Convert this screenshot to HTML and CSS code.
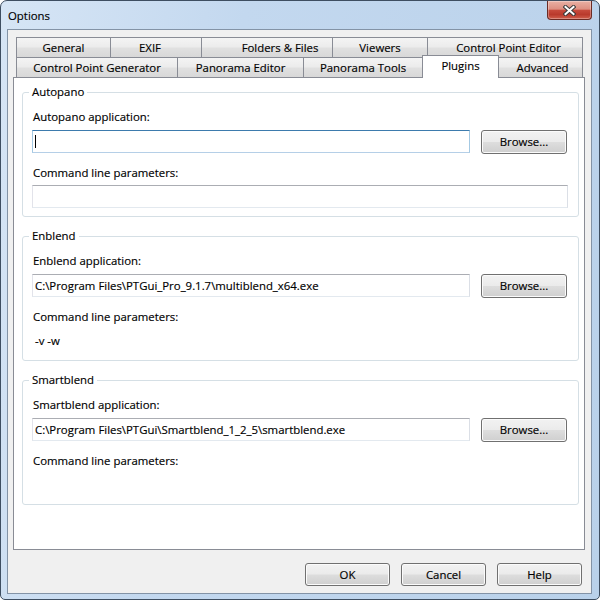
FILE: index.html
```html
<!DOCTYPE html>
<html>
<head>
<meta charset="utf-8">
<title>Options</title>
<link rel="stylesheet" href="styles.css">
</head>
<body>
<div class="window">
  <div class="titlebar">
    <span class="title">Options</span>
    <div class="close">
      <svg width="13" height="11" viewBox="0 0 13 11">
        <path d="M2.5 2 L10.5 9 M10.5 2 L2.5 9" stroke="#3a3a3a" stroke-width="4" stroke-linecap="square"/>
        <path d="M2.5 2 L10.5 9 M10.5 2 L2.5 9" stroke="#ffffff" stroke-width="2" stroke-linecap="square"/>
      </svg>
    </div>
  </div>
  <div class="client">
    <div class="tabs">
      <div class="tabrow">
        <div class="tab t-general">General</div>
        <div class="tab t-exif">EXIF</div>
        <div class="tab t-folders">Folders &amp; Files</div>
        <div class="tab t-viewers">Viewers</div>
        <div class="tab t-cpe last">Control Point Editor</div>
      </div>
      <div class="tabrow">
        <div class="tab t-cpg">Control Point Generator</div>
        <div class="tab t-pe">Panorama Editor</div>
        <div class="tab t-pt">Panorama Tools</div>
        <div class="tab t-plugins active">Plugins</div>
        <div class="tab t-advanced last">Advanced</div>
      </div>
      <div class="panel">
        <div class="group">
          <div class="legend">Autopano</div>
          <div class="label first">Autopano application:</div>
          <div class="row">
            <div class="field focused"><span class="caret"></span></div>
            <div class="btn browse">Browse...</div>
          </div>
          <div class="label second">Command line parameters:</div>
          <div class="field wide"></div>
        </div>
        <div class="group">
          <div class="legend">Enblend</div>
          <div class="label first">Enblend application:</div>
          <div class="row">
            <div class="field">C:\Program Files\PTGui_Pro_9.1.7\multiblend_x64.exe</div>
            <div class="btn browse">Browse...</div>
          </div>
          <div class="label second">Command line parameters:</div>
          <div class="field wide plain">-v -w</div>
        </div>
        <div class="group">
          <div class="legend">Smartblend</div>
          <div class="label first">Smartblend application:</div>
          <div class="row">
            <div class="field">C:\Program Files\PTGui\Smartblend_1_2_5\smartblend.exe</div>
            <div class="btn browse">Browse...</div>
          </div>
          <div class="label second">Command line parameters:</div>
          <div class="field wide plain"></div>
        </div>
      </div>
    </div>
    <div class="buttons">
      <div class="btn dlg">OK</div>
      <div class="btn dlg">Cancel</div>
      <div class="btn dlg">Help</div>
    </div>
  </div>
</div>
</body>
</html>
```
FILE: styles.css
```css
* {
  box-sizing: border-box;
  margin: 0;
  padding: 0;
}

html, body {
  background: #ffffff;
}

body {
  margin: 0;
  font-family: "Open Sans", "Noto Sans", sans-serif;
  font-size: 11.4px;
  color: #000;
  -webkit-text-stroke: 0.15px #000;
}

.window {
  width: 600px;
  height: 600px;
  border: 1px solid #3e4e61;
  border-radius: 7px 7px 5px 5px;
  background: linear-gradient(100deg, #d6e5f5 0%, #c3d8ef 35%, #b9d1ea 100%);
  padding: 0 7px 5px 6px;
  display: flex;
  flex-direction: column;
}

.titlebar {
  height: 28px;
  display: flex;
  align-items: flex-start;
}

.title {
  padding-left: 1px;
  padding-top: 7px;
  line-height: 16px;
  color: #000;
}

.close {
  margin-left: auto;
  width: 45px;
  height: 19px;
  border: 1px solid #6b2b24;
  border-top: none;
  border-radius: 0 0 4px 4px;
  background: linear-gradient(#e9b0a4 0%, #dd8f81 45%, #c64a3b 52%, #b93a2c 75%, #cf5f4c 100%);
  box-shadow: inset 0 0 0 1px rgba(255, 255, 255, 0.3);
  display: flex;
  align-items: center;
  justify-content: center;
}

.close svg {
  display: block;
}

.client {
  height: 565px;
  border: 1px solid #8393a6;
  background: #f0f0f0;
  padding-top: 7px;
}

.tabs {
  margin-left: 5px;
  width: 572px;
}

.tabrow {
  display: flex;
  align-items: flex-start;
  margin-left: 3px;
}

.tab {
  height: 20px;
  border-top: 1px solid #898c95;
  border-left: 1px solid #898c95;
  background: linear-gradient(#f4f4f4 0%, #ececec 45%, #e0e0e0 55%, #d8d8d8 100%);
  text-align: center;
  line-height: 19px;
  white-space: nowrap;
}

.tab.last {
  border-right: 1px solid #898c95;
}

.t-general { width: 94px; }
.t-exif { width: 91px; padding-right: 12px; }
.t-folders { width: 131px; padding-left: 26px; }
.t-viewers { width: 95px; }
.t-cpe { width: 156px; padding-left: 7px; }
.t-cpg { width: 161px; }
.t-pe { width: 126px; }
.t-pt { width: 119px; }
.t-plugins { width: 77px; }
.t-advanced { width: 84px; border-left: none; padding-left: 4px; }

.tab.active {
  background: #ffffff;
  height: 23px;
  margin-top: -2px;
  margin-bottom: -1px;
  border-right: 1px solid #898c95;
  position: relative;
  z-index: 1;
}

.panel {
  height: 473px;
  border: 1px solid #898c95;
  background: #ffffff;
  padding: 14px 5px 0 8px;
}

.group {
  height: 125px;
  border: 1px solid #d5dfe5;
  border-radius: 3px;
  padding-left: 9px;
}

.group + .group {
  margin-top: 19px;
}

.legend {
  display: block;
  width: max-content;
  height: 16px;
  line-height: 16px;
  margin-top: -9px;
  margin-left: -3px;
  padding: 0 3px;
  background: #ffffff;
}

.label {
  line-height: 16px;
  padding-left: 1px;
}

.label.first {
  margin-top: 9px;
}

.label.second {
  margin-top: 11px;
}

.row {
  display: flex;
  align-items: flex-start;
  margin-top: 5px;
}

.field {
  width: 438px;
  height: 23px;
  border: 1px solid;
  border-color: #abadb3 #dbdfe6 #e3e9ef #e2e3ea;
  background: #ffffff;
  padding-left: 2px;
  line-height: 21px;
  white-space: nowrap;
  overflow: hidden;
}

.field.focused {
  border-color: #3d7bad #a4c9e3 #b5cfe7 #a4c9e3;
}

.caret {
  display: block;
  width: 1px;
  height: 13px;
  margin-top: 4px;
  background: #000;
}

.field.wide {
  width: 536px;
  margin-top: 4px;
}

.field.plain {
  border-color: transparent;
}

.btn {
  border: 1px solid #707070;
  border-radius: 3px;
  background: linear-gradient(#f2f2f2 0%, #ebebeb 48%, #dddddd 52%, #cfcfcf 100%);
  box-shadow: inset 0 0 0 1px #fbfbfb;
  text-align: center;
  white-space: nowrap;
}

.browse {
  margin-left: 11px;
  width: 86px;
  height: 24px;
  line-height: 22px;
}

.buttons {
  display: flex;
  justify-content: flex-end;
  gap: 11px;
  margin-top: 13px;
  padding-right: 9px;
}

.dlg {
  width: 85px;
  height: 23px;
  line-height: 21px;
}
```
